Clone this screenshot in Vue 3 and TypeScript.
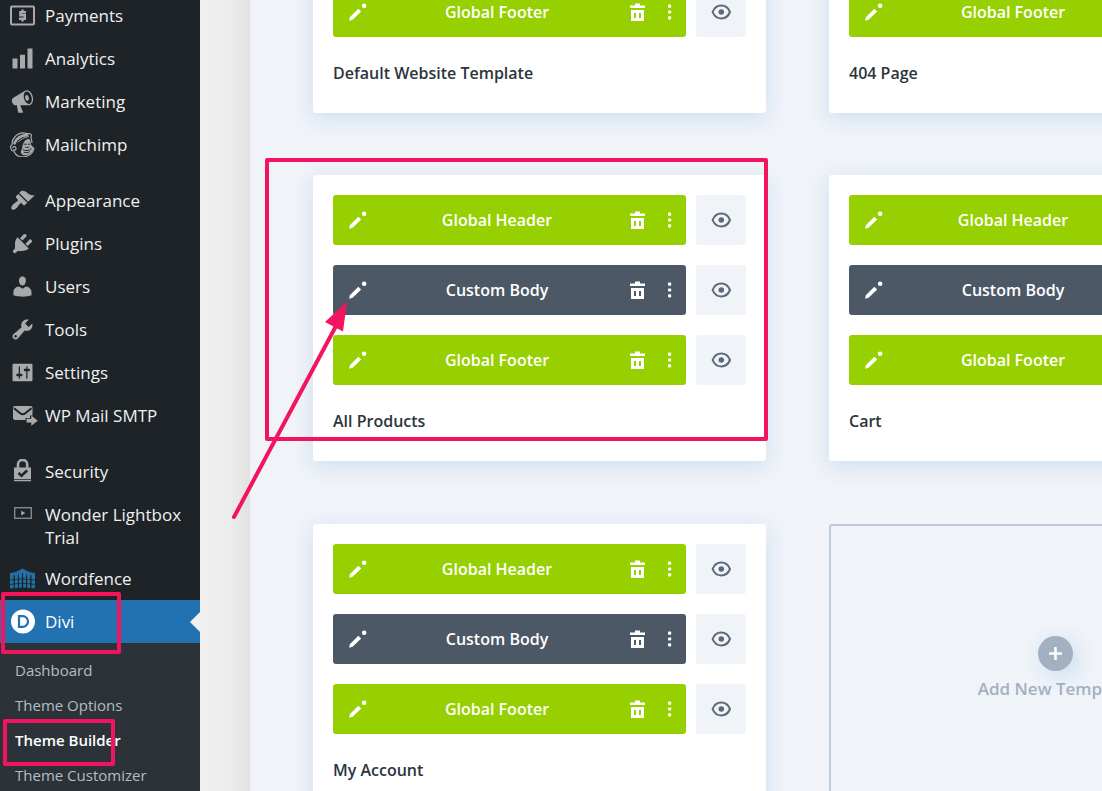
<script setup lang="ts">
interface MenuItem {
  label: string
  icon: string
  gap?: boolean
}

interface Area {
  label: string
  kind: 'global' | 'custom'
}

const menu: MenuItem[] = [
  { label: 'Payments', icon: 'payments' },
  { label: 'Analytics', icon: 'analytics' },
  { label: 'Marketing', icon: 'marketing' },
  { label: 'Mailchimp', icon: 'mailchimp' },
  { label: 'Appearance', icon: 'appearance', gap: true },
  { label: 'Plugins', icon: 'plugins' },
  { label: 'Users', icon: 'users' },
  { label: 'Tools', icon: 'tools' },
  { label: 'Settings', icon: 'settings' },
  { label: 'WP Mail SMTP', icon: 'smtp' },
  { label: 'Security', icon: 'security', gap: true },
  { label: 'Wonder Lightbox Trial', icon: 'lightbox' },
  { label: 'Wordfence', icon: 'wordfence' },
  { label: 'Divi', icon: 'divi' },
]

const submenu: string[] = ['Dashboard', 'Theme Options', 'Theme Builder', 'Theme Customizer']
const currentItem = 'Divi'
const currentPage = 'Theme Builder'

const areas: Area[] = [
  { label: 'Global Header', kind: 'global' },
  { label: 'Custom Body', kind: 'custom' },
  { label: 'Global Footer', kind: 'global' },
]

const templates: string[] = ['Default Website Template', '404 Page', 'All Products', 'Cart', 'My Account']

const dashicons: Record<string, string> = {
  analytics: 'M18 18V2h-4v16h4zm-6 0V7H8v11h4zm-6 0v-8H2v8h4z',
  marketing:
    'M18.15 5.94c.46 1.62.38 3.22-.02 4.48-.42 1.28-1.26 2.18-2.3 2.48-.16.06-.26.06-.4.06-.06.02-.12.02-.18.02-.06.02-.14.02-.22.02h-6.8l2.22 5.5c.02.14-.06.26-.14.34-.08.1-.24.16-.34.16H6.95c-.1 0-.26-.06-.34-.16-.08-.08-.16-.2-.14-.34l-1-5.5H4.25l-.02-.02c-.5.06-1.08-.18-1.54-.62s-.88-1.08-1.06-1.88c-.24-.8-.2-1.56-.02-2.2.18-.62.58-1.08 1.06-1.3l.02-.02 9-5.4c.1-.06.18-.1.24-.16.06-.04.14-.08.24-.12.16-.08.28-.12.5-.18 1.04-.3 2.24.1 3.22.98s1.84 2.24 2.26 3.86zm-2.58 5.98h-.02c.4-.1.74-.34 1.04-.7.58-.7.86-1.76.86-3.04 0-.64-.1-1.3-.28-1.98-.34-1.36-1.02-2.5-1.78-3.24s-1.68-1.1-2.46-.88c-.82.22-1.4.96-1.7 2-.32 1.04-.28 2.36.06 3.72.38 1.36 1 2.5 1.8 3.24.78.74 1.62 1.1 2.48.88zm-2.54-7.08c.22-.04.42-.02.62.04.38.16.76.48 1.02 1s.42 1.2.42 1.78c0 .3-.04.56-.12.8-.18.48-.44.84-.86.94-.34.1-.8-.06-1.14-.4s-.64-.86-.78-1.5c-.18-.62-.12-1.24.02-1.72s.48-.84.82-.94z',
  appearance:
    'M14.48 11.06L7.41 3.99l1.5-1.5c.5-.56 2.3-.47 3.51.32 1.21.8 1.43 1.28 2.91 2.1 1.18.64 2.45 1.26 4.45.85zm-.71.71L6.7 4.7 4.93 6.47c-.39.39-.39 1.02 0 1.41l1.06 1.06c.39.39.39 1.03 0 1.42-.6.6-1.43 1.11-2.21 1.69-.35.26-.7.53-1.01.84C1.43 14.23.4 16.08 1.4 17.07c.99 1 2.84-.03 4.18-1.36.31-.31.58-.66.85-1.02.57-.78 1.08-1.61 1.69-2.21.39-.39 1.02-.39 1.41 0l1.06 1.06c.39.39 1.02.39 1.41 0z',
  plugins:
    'M13.11 4.36L9.87 7.6 8 5.73l3.24-3.24c.35-.34 1.05-.2 1.56.32.52.51.66 1.21.31 1.55zm-8 1.77l.91-1.12 9.01 9.01-1.19.84c-.71.71-2.63 1.16-3.82 1.16H6.14L4.9 17.26c-.59.59-1.54.59-2.12 0-.59-.58-.59-1.53 0-2.12l1.24-1.24v-3.88c0-1.13.4-3.19 1.09-3.89zm7.26 3.97l3.24-3.24c.34-.35 1.04-.21 1.55.31.52.51.66 1.21.31 1.55l-3.24 3.25z',
  users:
    'M10 9.25c-2.27 0-2.73-3.44-2.73-3.44C7 4.02 7.82 2 9.97 2c2.16 0 2.98 2.02 2.71 3.81 0 0-.41 3.44-2.68 3.44zm0 2.57L12.72 10c2.39 0 4.52 2.33 4.52 4.53v2.49s-3.65 1.13-7.24 1.13c-3.65 0-7.24-1.13-7.24-1.13v-2.49c0-2.25 1.94-4.48 4.47-4.48z',
  tools:
    'M16.68 9.77c-1.34 1.34-3.3 1.67-4.95.99l-5.41 6.52c-.99.99-2.59.99-3.58 0s-.99-2.59 0-3.57l6.52-5.42c-.68-1.65-.35-3.61.99-4.95 1.28-1.28 3.12-1.62 4.72-1.06l-2.89 2.89 2.82 2.82 2.86-2.87c.53 1.58.18 3.39-1.08 4.65zM3.81 16.21c.4.39 1.04.39 1.43 0 .4-.4.4-1.04 0-1.43-.39-.4-1.03-.4-1.43 0-.39.39-.39 1.03 0 1.43z',
  settings:
    'M18 16V4c0-.55-.45-1-1-1H3c-.55 0-1 .45-1 1v12c0 .55.45 1 1 1h14c.55 0 1-.45 1-1zM8 11h1c.55 0 1 .45 1 1s-.45 1-1 1H8v1.5c0 .28-.22.5-.5.5s-.5-.22-.5-.5V13H6c-.55 0-1-.45-1-1s.45-1 1-1h1V5.5c0-.28.22-.5.5-.5s.5.22.5.5V11zm5-2h-1c-.55 0-1-.45-1-1s.45-1 1-1h1V5.5c0-.28.22-.5.5-.5s.5.22.5.5V7h1c.55 0 1 .45 1 1s-.45 1-1 1h-1v5.5c0 .28-.22.5-.5.5s-.5-.22-.5-.5V9z',
}
</script>

<template>
  <div class="screen">
    <nav class="sidebar" aria-label="Main menu">
      <ul class="menu">
        <li v-for="item in menu" :key="item.label" :class="{ gap: item.gap }">
          <a
            href="#"
            class="menu-link"
            :class="{ current: item.label === currentItem, tall: item.icon === 'lightbox' }"
          >
            <svg v-if="dashicons[item.icon]" class="menu-icon" viewBox="0 0 20 20" aria-hidden="true">
              <path :d="dashicons[item.icon]" fill="currentColor" fill-rule="evenodd" />
            </svg>
            <svg v-else-if="item.icon === 'payments'" class="menu-icon" viewBox="0 0 25 25" aria-hidden="true">
              <rect x="1" y="3.5" width="23" height="18" rx="1" fill="none" stroke="currentColor" stroke-width="2" />
              <path d="M16 9.2H10.4V12.3H14.8V15.8H9M12.5 6.5V9M12.5 16V18.5" fill="none" stroke="currentColor" stroke-width="2.4" />
            </svg>
            <svg v-else-if="item.icon === 'mailchimp'" class="menu-icon" viewBox="0 0 25 25" aria-hidden="true">
              <g fill="none" stroke="currentColor" stroke-linecap="round">
                <path d="M2.2 12.5C1.2 7.5 7 .8 13 .8c2 .3 3.400 1 6 .9 2.500.2 3 1.300 2 3.300 0 1.500.8 3.500 1 5.500M2.200 12.500C-.5 14 .2 18.500 3.800 19c1.500 4 5.500 6.200 10 5.800 5.500-.4 9-4 10-7.600.3-1-.5-1.700-1.300-2" stroke-width="1.200" />
                <path d="M4.500 11.200C6.500 6.500 11 3.500 17 3.200" stroke-width="2.800" />
                <path d="M8 10.200c2.500-3 6.500-5 10.500-5.500" stroke-width="1" />
                <path d="M2.800 15.500c1.200-1.500 3-.8 3.200.8s-1 2-2 1.500" stroke-width="1.300" />
              </g>
              <path d="M13.500 11c1.300-2.800 3-4 5.200-4 2.200.4 1.700 3.500 2.600 5.800.2 1.500 2.500 2.200 2.200 4.200-1 3.600-4.500 6.200-8.500 6.200-3 0-4.500-2-4-4 .4-1.800 1.500-2.400 1.300-4.200-.1-1.400.4-2.600 1.200-4z" fill="currentColor" />
              <path d="M14 12.500c1-.6 2-.6 2.800 0M18.500 12.200h1.500M13.200 17.800c2 1.400 5.500 1 8-.8M14 20.300c2 .6 4 .3 5.500-.5M15.500 15.200c1 .5 2.500.4 3.500-.1" fill="none" stroke="#1d2327" stroke-width="1" stroke-linecap="round" />
            </svg>
            <svg v-else-if="item.icon === 'smtp'" class="menu-icon wide-icon" viewBox="0 0 28 25" aria-hidden="true">
              <path d="M5 3h15.500a2 2 0 0 1 2 2v7.600H20v2.300h-4.500V17H5a2 2 0 0 1-2-2V5a2 2 0 0 1 2-2z" fill="currentColor" />
              <path d="M4 5.200l6.200 5a4 4 0 0 0 5.100 0l6.200-5" fill="none" stroke="#1d2327" stroke-width="2" />
              <path d="M16.500 15.800h4.800v-3.300l6.500 5.200-6.500 5.100v-3.300h-4.800z" fill="currentColor" />
            </svg>
            <svg v-else-if="item.icon === 'security'" class="menu-icon" viewBox="0 0 25 25" aria-hidden="true">
              <path d="M8 10V5.500a4.600 4.600 0 0 1 9.200 0V10" fill="none" stroke="currentColor" stroke-width="2.600" />
              <path d="M4 8.500h17V20H4zM4 20.800h17v1.400H4z" fill="currentColor" />
              <path d="M8.500 13.800l3 3 5.700-5.300" fill="none" stroke="#1d2327" stroke-width="2.600" />
            </svg>
            <svg v-else-if="item.icon === 'lightbox'" class="menu-icon" viewBox="0 0 25 25" aria-hidden="true">
              <rect x="4.700" y="5.700" width="16.600" height="10.600" fill="none" stroke="#85888b" stroke-width="1.400" />
              <path d="M11.200 8.800l4.200 2.200-4.200 2.400z" fill="#a7aaad" />
            </svg>
            <svg v-else-if="item.icon === 'wordfence'" class="menu-icon" viewBox="0 0 25 25" aria-hidden="true">
              <g fill="#2271a5">
                <path d="M0 7C5 6.500 9 4.800 12.500 2.500 16 4.800 20 6.500 25 7v3.500H0z" />
                <path d="M0 9.500L2 8l1.800 2v12.300H0zM4.500 9l1.700-2L8 9v12.800l-3.500.4zM8.800 8l1.500-2 1.500 2v13.500l-3 .2zM13.200 8l1.500-2 1.500 2v13.700l-3-.2zM17 9l1.800-2 1.700 2v13.200l-3.500-.4zM21.200 10L23 8l2 1.500v12.800h-3.800z" />
              </g>
              <path d="M0 14.200c8-1.600 17-1.600 25 0M0 18.400c8-1.200 17-1.200 25 0" fill="none" stroke="#1d2327" stroke-width=".8" />
              <path d="M4.200 9v13M8.400 8.500v13.500M12.500 7v15M16.600 8.500v13.500M20.900 9v13" fill="none" stroke="#1d2327" stroke-width="1" />
            </svg>
            <svg v-else class="menu-icon" viewBox="0 0 25 25" aria-hidden="true">
              <circle cx="13" cy="12.500" r="12" fill="#fff" />
              <path d="M9 7.200H12.700a5.300 5.300 0 0 1 0 10.600H9z" fill="none" stroke="#2271b1" stroke-width="2.200" />
            </svg>
            <span class="menu-label">{{ item.label }}</span>
          </a>
        </li>
      </ul>
      <ul class="submenu">
        <li v-for="page in submenu" :key="page">
          <a href="#" class="submenu-link" :class="{ active: page === currentPage }">{{ page }}</a>
        </li>
      </ul>
    </nav>

    <div class="gutter"></div>

    <main class="builder">
      <div class="grid">
        <article v-for="name in templates" :key="name" class="card">
          <div v-for="area in areas" :key="area.label" class="row">
            <div class="bar" :class="area.kind">
              <button type="button" class="edit" :aria-label="`Edit ${area.label}`">
                <svg width="18" height="18" viewBox="0 0 18 18" aria-hidden="true">
                  <path d="M.2 17.800l.6-3.600L9.300 5.700l2.900 2.900-8.600 8.200zM15.200.4a2.300 2.300 0 1 1-.1 4.600 2.300 2.300 0 0 1 .1-4.600z" fill="currentColor" />
                </svg>
              </button>
              <span class="area-name">{{ area.label }}</span>
              <button type="button" class="tool delete" :aria-label="`Delete ${area.label}`">
                <svg width="15" height="18" viewBox="0 0 15 18" aria-hidden="true">
                  <path d="M5 .5h5v2h5V5H0V2.500h5zM1 7h13v11H1zM4 10v5h2v-5zM9 10v5h2v-5z" fill="currentColor" fill-rule="evenodd" />
                </svg>
              </button>
              <button type="button" class="tool" :aria-label="`More options for ${area.label}`">
                <svg width="4" height="16" viewBox="0 0 4 16" aria-hidden="true">
                  <rect x="0" y=".6" width="3.200" height="3.200" rx=".8" fill="currentColor" />
                  <rect x="0" y="6.400" width="3.200" height="3.200" rx=".8" fill="currentColor" />
                  <rect x="0" y="12.200" width="3.200" height="3.200" rx=".8" fill="currentColor" />
                </svg>
              </button>
            </div>
            <button type="button" class="preview" :aria-label="`Toggle ${area.label}`">
              <svg width="20" height="16" viewBox="0 0 20 16" aria-hidden="true">
                <path d="M1.600 8C3.200 3.800 6.300 1.600 10.300 1.600S17.300 3.800 19 8C17.300 12.200 14.300 14.400 10.300 14.400S3.200 12.200 1.600 8z" fill="none" stroke="currentColor" stroke-width="2" />
                <circle cx="10.300" cy="8" r="2.800" fill="currentColor" />
              </svg>
            </button>
          </div>
          <h2 class="card-title">{{ name }}</h2>
        </article>
        <button type="button" class="add-card">
          <span class="plus">
            <svg width="13" height="13" viewBox="0 0 13 13" aria-hidden="true">
              <path d="M6.500 1v11M1 6.500h11" stroke="currentColor" stroke-width="2.600" stroke-linecap="round" />
            </svg>
          </span>
          <span class="add-label">Add New Template</span>
        </button>
      </div>
    </main>

    <svg class="markup" width="780" height="791" viewBox="0 0 780 791" aria-hidden="true">
      <g fill="none" stroke="#f3145f" stroke-width="4" stroke-linejoin="round" stroke-linecap="round">
        <rect x="267" y="160" width="499" height="279" />
        <rect x="3" y="594" width="116" height="58" />
        <rect x="5" y="721" width="108" height="43" />
        <path d="M234 517L336 326" />
      </g>
      <path d="M347 301.500L325 322l8.500 4.500 9.500 5z" fill="#f3145f" />
    </svg>
  </div>
</template>

<style>
body {
  margin: 0;
  overflow: hidden;
}
</style>

<style scoped>
.screen {
  position: relative;
  display: flex;
  height: 100vh;
  overflow: hidden;
  background: #f0f3f8;
  font-family: "Open Sans", "Noto Sans", sans-serif;
}

ul {
  margin: 0;
  padding: 0;
  list-style: none;
}

button {
  border: 0;
  padding: 0;
  background: none;
  font: inherit;
  color: inherit;
  cursor: pointer;
}

svg {
  display: block;
  flex: none;
}

.sidebar {
  flex: none;
  width: 200px;
  background: #1d2327;
}

.menu {
  margin-top: -6px;
}

.gap {
  margin-top: 13px;
}

.menu-link {
  position: relative;
  display: flex;
  align-items: flex-start;
  gap: 10px;
  padding: 10px;
  color: #a7aaad;
  font-size: 17px;
  line-height: 23px;
  text-decoration: none;
}

.menu-link.tall {
  padding-bottom: 8px;
}

.menu-label {
  color: #f0f0f1;
}

.menu-icon {
  width: 25px;
  height: 25px;
  margin: -1px 0;
}

.wide-icon {
  width: 28px;
  margin-right: -3px;
}

.current {
  background: #2271b1;
}

.current .menu-label {
  color: #fff;
}

.current::after {
  content: "";
  position: absolute;
  right: 0;
  top: 50%;
  margin-top: -10px;
  border: 10px solid transparent;
  border-left: 0;
  border-right-color: #f0f0f1;
}

.submenu {
  height: 100vh;
  padding-top: 10px;
  background: #2c3338;
}

.submenu-link {
  display: block;
  padding: 0 15px;
  color: #b5bcc2;
  font-size: 15px;
  line-height: 35px;
  text-decoration: none;
  white-space: nowrap;
}

.active {
  color: #fff;
  font-weight: 600;
}

.gutter {
  flex: none;
  width: 50px;
  background: linear-gradient(90deg, #f0f0f1, #ececec 60%, #e2e2e2);
}

.builder {
  flex: 1;
  min-width: 0;
  overflow: hidden;
}

.grid {
  display: grid;
  grid-template-columns: repeat(2, minmax(453px, 1fr));
  grid-template-rows: 286px 287px 286px;
  align-items: start;
  gap: 62px 63px;
  margin-top: -173px;
  padding: 0 63px;
}

.card {
  padding: 20px 20px 28px;
  border-radius: 3px;
  background: #fff;
  box-shadow: 0 5px 20px rgba(43, 135, 218, 0.18);
}

.row {
  display: flex;
  gap: 10px;
  margin-bottom: 20px;
}

.bar {
  flex: 1;
  display: flex;
  align-items: center;
  height: 50px;
  border-radius: 3px;
  color: #fff;
}

.global {
  background: #97d000;
}

.custom {
  background: #4c5866;
}

.edit,
.tool {
  display: flex;
  align-items: center;
  justify-content: center;
  height: 50px;
}

.edit {
  width: 50px;
}

.tool {
  width: 32px;
}

.delete {
  width: 33px;
}

.area-name {
  flex: 1;
  margin-right: 10px;
  font-size: 16px;
  font-weight: 600;
  text-align: center;
}

.preview {
  display: flex;
  align-items: center;
  justify-content: center;
  width: 50px;
  height: 50px;
  border-radius: 3px;
  background: #f0f3f8;
  color: #5c6978;
}

.card-title {
  margin: 24px 0 0;
  color: #2b353d;
  font-size: 16px;
  font-weight: 600;
  line-height: 24px;
}

.add-card {
  box-sizing: border-box;
  display: flex;
  flex-direction: column;
  align-items: center;
  justify-content: center;
  gap: 6px;
  height: 286px;
  padding-top: 2px;
  border: 2px solid #bccad9;
  border-radius: 3px;
  color: #a3b0c2;
}

.plus {
  display: flex;
  align-items: center;
  justify-content: center;
  width: 35px;
  height: 35px;
  border-radius: 50%;
  background: #a3b0c2;
  color: #fff;
  box-shadow: 5px 5px 20px rgba(43, 135, 218, 0.2);
}

.add-label {
  font-size: 17px;
  font-weight: 600;
  line-height: 24px;
  white-space: nowrap;
}

.markup {
  position: absolute;
  top: 0;
  left: 0;
  pointer-events: none;
}
</style>
